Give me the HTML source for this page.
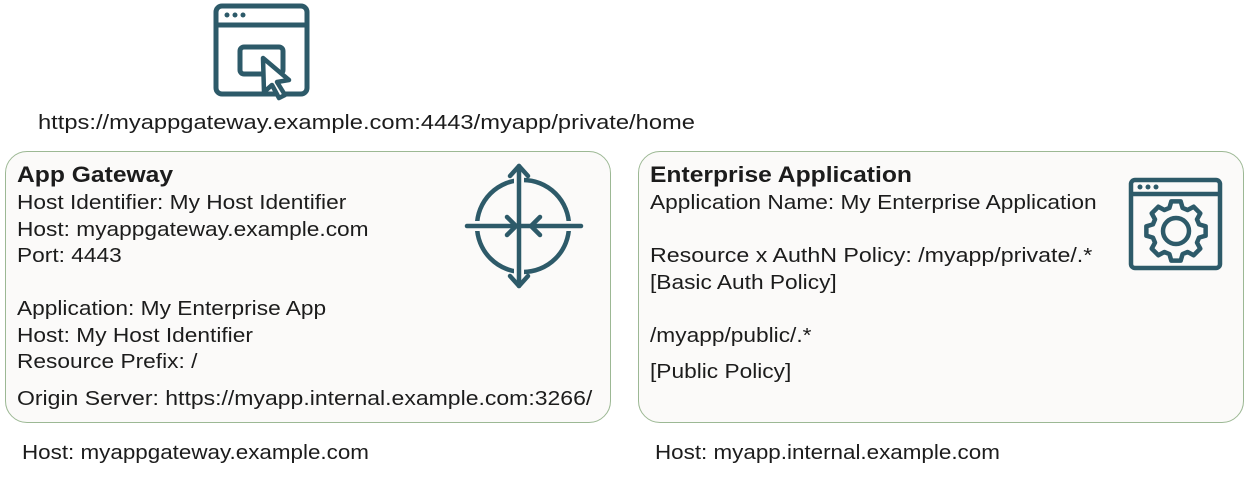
<!DOCTYPE html>
<html><head><meta charset="utf-8"><style>
body{margin:0;width:1248px;height:479px;background:#fff;position:relative;overflow:hidden;font-family:"Liberation Sans",sans-serif;color:#1c1c1c}
.t{position:absolute;font-size:20px;line-height:24px;white-space:nowrap;transform:scaleX(1.135);transform-origin:0 0}
.b{font-weight:bold;font-size:22px;transform:scaleX(1.12)}
.box{position:absolute;top:151px;height:272px;width:606px;border:1.5px solid #9cb894;border-radius:22px;background:#fbfaf9;box-sizing:border-box}
svg{position:absolute}
</style></head><body>
<svg style="left:0;top:0" width="1248" height="479">
<g fill="none" stroke="#2d5a69" stroke-width="5" stroke-linecap="round" stroke-linejoin="round">
<rect x="216" y="6" width="91" height="88" rx="6"/>
<line x1="216" y1="25" x2="307" y2="25"/>
<rect x="240" y="47" width="43" height="27" rx="4"/>
</g>
<g fill="#2d5a69"><circle cx="227" cy="15" r="2.5"/><circle cx="235" cy="15" r="2.5"/><circle cx="243" cy="15" r="2.5"/></g>
<path d="M263 58 L289 80 L277 82 L285 95 L279 98 L272 85 L264 92 Z" fill="#fff" stroke="#2d5a69" stroke-width="4.5" stroke-linejoin="round"/>
</svg>
<div class="t" style="left:38px;top:111px;transform:scaleX(1.185)">https://myappgateway.example.com:4443/myapp/private/home</div>
<div class="box" style="left:5px"></div>
<div class="box" style="left:638px"></div>
<svg style="left:0;top:0" width="1248" height="479">
<g fill="none" stroke="#2d5a69" stroke-width="4.5">
<circle cx="523" cy="226" r="46"/>
</g>
<g stroke="#fbfaf9" stroke-width="10"><line x1="519" y1="168" x2="519" y2="285"/><line x1="468" y1="226" x2="580" y2="226"/></g>
<g fill="none" stroke="#2d5a69" stroke-width="4.5" stroke-linecap="round" stroke-linejoin="round">
<line x1="519" y1="166" x2="519" y2="286"/><line x1="467" y1="226" x2="581" y2="226"/>
<polyline points="510,176 519,166 528,176"/><polyline points="510,276 519,286 528,276"/>
<polyline points="507,217 516,226 507,235"/><polyline points="540,217 531,226 540,235"/>
</g>
<g fill="none" stroke="#2d5a69" stroke-width="4.5" stroke-linejoin="round">
<rect x="1131" y="180" width="89" height="88" rx="4"/>
<line x1="1131" y1="194" x2="1220" y2="194"/>
<circle cx="1176" cy="231" r="13"/>
<polygon transform="translate(1176,231)" points="23.07,-6.62 29.63,-4.69 29.63,4.69 23.07,6.62 20.99,11.63 24.27,17.64 17.64,24.27 11.63,20.99 6.62,23.07 4.69,29.63 -4.69,29.63 -6.62,23.07 -11.63,20.99 -17.64,24.27 -24.27,17.64 -20.99,11.63 -23.07,6.62 -29.63,4.69 -29.63,-4.69 -23.07,-6.62 -20.99,-11.63 -24.27,-17.64 -17.64,-24.27 -11.63,-20.99 -6.62,-23.07 -4.69,-29.63 4.69,-29.63 6.62,-23.07 11.63,-20.99 17.64,-24.27 24.27,-17.64 20.99,-11.63"/>
</g>
<g fill="#2d5a69"><circle cx="1140" cy="187" r="2.5"/><circle cx="1148" cy="187" r="2.5"/><circle cx="1156" cy="187" r="2.5"/></g>
</svg>
<div class="t b" style="left:17px;top:163px">App Gateway</div>
<div class="t" style="left:17px;top:191px">Host Identifier: My Host Identifier</div>
<div class="t" style="left:17px;top:218px">Host: myappgateway.example.com</div>
<div class="t" style="left:17px;top:244px">Port: 4443</div>
<div class="t" style="left:17px;top:297px">Application: My Enterprise App</div>
<div class="t" style="left:17px;top:324px">Host: My Host Identifier</div>
<div class="t" style="left:17px;top:350px">Resource Prefix: /</div>
<div class="t" style="left:17px;top:387px;transform:scaleX(1.15)">Origin Server: https://myapp.internal.example.com:3266/</div>
<div class="t b" style="left:650px;top:163px">Enterprise Application</div>
<div class="t" style="left:650px;top:191px">Application Name: My Enterprise Application</div>
<div class="t" style="left:650px;top:244px;transform:scaleX(1.16)">Resource x AuthN Policy: /myapp/private/.*</div>
<div class="t" style="left:650px;top:271px">[Basic Auth Policy]</div>
<div class="t" style="left:650px;top:324px">/myapp/public/.*</div>
<div class="t" style="left:650px;top:360px">[Public Policy]</div>
<div class="t" style="left:22px;top:441px;transform:scaleX(1.12)">Host: myappgateway.example.com</div>
<div class="t" style="left:655px;top:441px;transform:scaleX(1.12)">Host: myapp.internal.example.com</div>
</body></html>
